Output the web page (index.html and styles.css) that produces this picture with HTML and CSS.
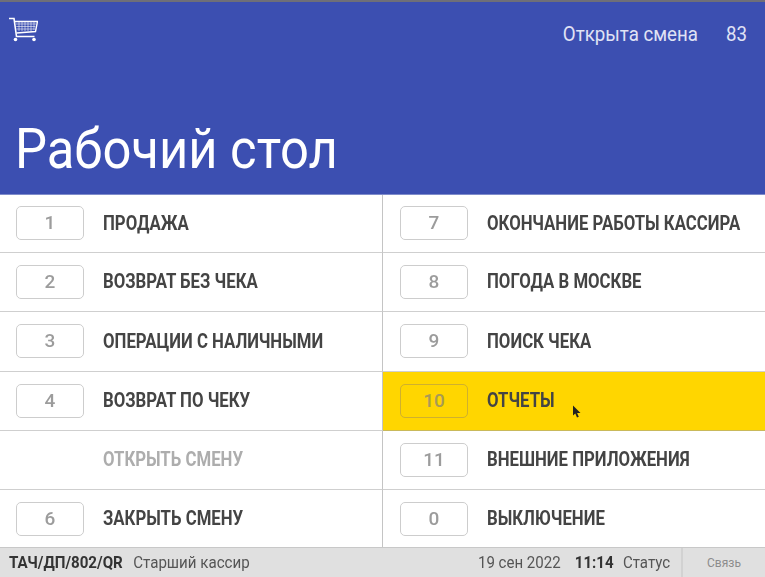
FILE: index.html
```html
<!DOCTYPE html>
<html lang="ru">
<head>
<meta charset="utf-8">
<title>Рабочий стол</title>
<link rel="stylesheet" href="styles.css">
</head>
<body>
<div class="app">
  <header class="header">
    <div class="topbar">
      <svg class="cart" width="30" height="26" viewBox="0 0 30 26" fill="none" stroke="#fff">
        <path d="M1 2.500h5l2.500 18h18" stroke-width="1.600"/>
        <path d="M6.800 5.500H29.500l-2 10-19 1.500" stroke-width="1.400"/>
        <path d="M8 8h20M8.300 10.500h19M8.500 13h18M11 6v9M14 6v9M17 6v9M20 6v9M23 6v9M26 6v8" stroke-width=".8" opacity=".7"/>
        <circle cx="7.500" cy="23.500" r="1.800" fill="#fff" stroke="none"/>
        <circle cx="26" cy="23.500" r="1.800" fill="#fff" stroke="none"/>
      </svg>
      <div class="shift"><span>Открыта смена</span><span class="shift-no">83</span></div>
    </div>
    <h1 class="title">Рабочий стол</h1>
  </header>
  <main class="menu">
    <div class="row"><span class="key">1</span><span class="label">ПРОДАЖА</span></div>
    <div class="row"><span class="key">7</span><span class="label">ОКОНЧАНИЕ РАБОТЫ КАССИРА</span></div>
    <div class="row"><span class="key">2</span><span class="label">ВОЗВРАТ БЕЗ ЧЕКА</span></div>
    <div class="row"><span class="key">8</span><span class="label">ПОГОДА В МОСКВЕ</span></div>
    <div class="row"><span class="key">3</span><span class="label">ОПЕРАЦИИ С НАЛИЧНЫМИ</span></div>
    <div class="row"><span class="key">9</span><span class="label">ПОИСК ЧЕКА</span></div>
    <div class="row"><span class="key">4</span><span class="label">ВОЗВРАТ ПО ЧЕКУ</span></div>
    <div class="row active"><span class="key">10</span><span class="label">ОТЧЕТЫ</span>
      <svg class="pointer" width="9" height="13" viewBox="0 0 9 13"><path d="M1 .5v10l2.300-2 1.700 4 1.800-.8-1.700-3.800H8.500z" fill="#222"/></svg>
    </div>
    <div class="row disabled"><span class="key blank"></span><span class="label">ОТКРЫТЬ СМЕНУ</span></div>
    <div class="row"><span class="key">11</span><span class="label">ВНЕШНИЕ ПРИЛОЖЕНИЯ</span></div>
    <div class="row last"><span class="key">6</span><span class="label">ЗАКРЫТЬ СМЕНУ</span></div>
    <div class="row last"><span class="key">0</span><span class="label">ВЫКЛЮЧЕНИЕ</span></div>
  </main>
  <footer class="status">
    <div class="user"><b>ТАЧ/ДП/802/QR</b><span>Старший кассир</span></div>
    <div class="meta"><span>19 сен 2022</span><b class="time">11:14</b><span>Статус</span></div>
    <div class="link">Связь</div>
  </footer>
</div>
</body>
</html>
```
FILE: styles.css
```css
* { box-sizing: border-box; }
html, body { margin: 0; height: 100%; }
body { font-family: Roboto, "Liberation Sans", sans-serif; background: #fff; overflow: hidden; }
.app { width: 765px; height: 577px; display: flex; flex-direction: column; filter: blur(.35px); }

.header {
  height: 195px;
  flex: none;
  background: #3c4fb1;
  border-top: 2px solid #6f6f78;
  border-bottom: 1px solid #7f8ccb;
  display: flex;
  flex-direction: column;
  justify-content: space-between;
  color: #fff;
}
.topbar { display: flex; justify-content: space-between; padding: 14px 18px 0 8px; }
.cart { display: block; }
.shift { display: flex; gap: 30px; font-size: 20px; line-height: 24px; padding-top: 6px; color: #e0e3f5; transform: scaleX(.935); transform-origin: right center; }
.title {
  margin: 0 0 13px 15px;
  font-size: 56px;
  line-height: 64px;
  font-weight: 400;
  transform: scaleX(.906);
  transform-origin: left center;
  white-space: nowrap;
}

.menu { flex: 1; display: grid; grid-template-columns: 383px 382px; grid-template-rows: 58px 59px 60px 59px 59px 57px; }
.row {
  position: relative;
  display: flex;
  align-items: center;
  padding: 0 0 1px 16px;
  border-bottom: 1px solid #cfcfcf;
}
.row:nth-child(odd) { border-right: 1px solid #c4c4c4; }
.row:nth-child(even) { padding-left: 17px; }
.row.last { border-bottom: none; padding-bottom: 0; }
.key {
  width: 68px;
  height: 34px;
  border: 1px solid #cdcdcd;
  border-radius: 5px;
  text-align: center;
  line-height: 32px;
  font-size: 19px;
  font-weight: 500;
  color: #9c9c9c;
  margin-right: 19px;
  flex: none;
}
.key.blank { visibility: hidden; }
.label {
  font-size: 20px;
  font-weight: 700;
  color: #444;
  white-space: nowrap;
  display: inline-block;
  margin-bottom: 1px;
  transform: scaleX(.838);
  transform-origin: left center;
}
.active { background: #ffd600; border-bottom-color: #c9b95a; }
.active .key { border-color: #cfb02e; color: #a79a55; }
.disabled .label { color: #adadad; }
.pointer { position: absolute; left: 189px; top: 33px; }

.status {
  height: 30px;
  flex: none;
  background: #e0e0e0;
  border-top: 1px solid #c8c8c8;
  display: flex;
  align-items: center;
  font-size: 16px;
  color: #555;
  padding-left: 9px;
}
.status b { color: #333; font-weight: 700; }
.user { display: flex; gap: 11px; flex: 1; transform: scaleX(.945); transform-origin: left center; }
.meta { display: flex; padding-right: 12px; transform: scaleX(.94); transform-origin: right center; }
.time { margin: 0 10px 0 15px; }
.link { width: 84px; height: 100%; border-left: 2px solid #d2d2d2; text-align: center; line-height: 30px; font-size: 12px; color: #8c8c8c; }
```
